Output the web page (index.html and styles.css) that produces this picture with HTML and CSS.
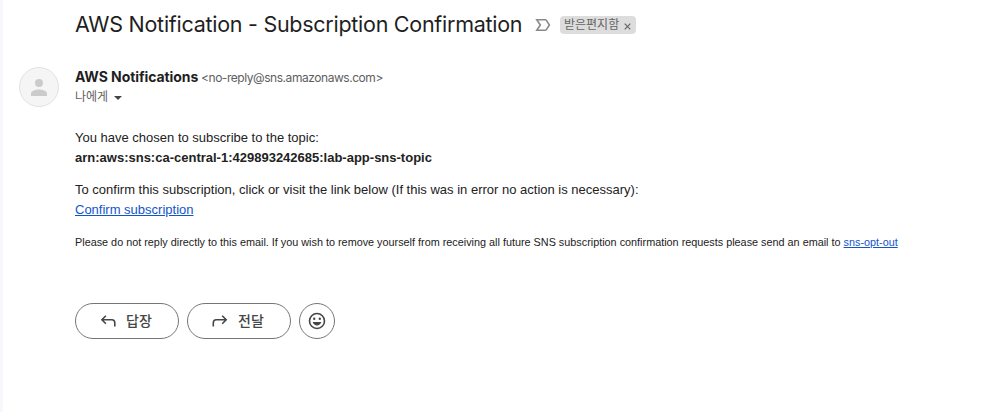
FILE: index.html
```html
<!DOCTYPE html>
<html lang="ko">
<head>
<meta charset="utf-8">
<title>AWS Notification - Subscription Confirmation</title>
<link rel="stylesheet" href="styles.css">
</head>
<body>
<main class="mail">
  <header class="subject">
    <h1 class="subject-text">AWS Notification - Subscription Confirmation</h1>
    <svg class="important" width="16" height="14" viewBox="0 0 16 14" fill="none" stroke="#8a8a8a" stroke-width="1.6"><path d="M1.8 1.8H10.2Q11 1.8 11.4 2.4L14.4 7L11.4 11.6Q11 12.2 10.2 12.2H1.8L5.3 7Z"/></svg>
    <span class="label"><span class="label-name">받은편지함</span><svg width="7" height="7" viewBox="0 0 7 7" stroke="#666" stroke-width="1.2"><path d="M.7.7L6.3 6.3M6.3.7L.7 6.3"/></svg></span>
  </header>
  <section class="sender">
    <div class="avatar"><svg width="16" height="17" viewBox="0 0 16 17" fill="#cbcbcb"><circle cx="8" cy="4" r="4"/><path d="M0 17V14.4C0 11.5 5 10.4 8 10.4S16 11.5 16 14.4V17Z"/></svg></div>
    <div class="sender-info">
      <div class="from"><strong class="name">AWS Notifications</strong><span class="address">&lt;no-reply@sns.amazonaws.com&gt;</span></div>
      <div class="to"><span>나에게</span><svg width="8" height="4" viewBox="0 0 8 4" fill="#444"><path d="M0 0H8L4 4Z"/></svg></div>
    </div>
  </section>
  <article class="body">
    <p>You have chosen to subscribe to the topic:<br><b>arn:aws:sns:ca-central-1:429893242685:lab-app-sns-topic</b></p>
    <p>To confirm this subscription, click or visit the link below (If this was in error no action is necessary):<br><a href="#">Confirm subscription</a></p>
    <p class="note">Please do not reply directly to this email. If you wish to remove yourself from receiving all future SNS subscription confirmation requests please send an email to <a href="#">sns-opt-out</a></p>
  </article>
  <footer class="actions">
    <button class="action"><svg width="16" height="12" viewBox="0 0 16 12" fill="none" stroke="#444746" stroke-width="1.6"><path d="M5.9.8L1.9 4.8L5.9 8.8M2.1 4.8H11.8Q14.8 4.8 14.8 7.8V11.5"/></svg><span>답장</span></button>
    <button class="action"><svg width="16" height="12" viewBox="0 0 16 12" fill="none" stroke="#444746" stroke-width="1.6"><path d="M10.2.8L14.2 4.8L10.2 8.8M14 4.8H4.3Q1.3 4.8 1.3 7.8V11.5"/></svg><span>전달</span></button>
    <button class="action react" aria-label="emoji"><svg width="18" height="18" viewBox="0 0 18 18"><circle cx="9" cy="9" r="7.5" fill="none" stroke="#444746" stroke-width="1.6"/><g fill="#444746"><circle cx="6.2" cy="6.7" r="1.2"/><circle cx="11.8" cy="6.7" r="1.2"/><path d="M4.7 10H13.3C12.6 12.2 11 13.5 9 13.5S5.4 12.2 4.7 10Z"/></g></svg></button>
  </footer>
</main>
</body>
</html>
```
FILE: styles.css
```css
* { box-sizing: border-box; }
body { margin: 0; background: #fff; color: #222; font-family: "Liberation Sans", Arial, sans-serif; }
.mail { height: 412px; border-left: 3px solid #f6f8fc; padding: 10px 16px 0; }
.subject { display: flex; align-items: center; height: 30px; padding-left: 56px; }
.subject-text { margin: -2px 0 0; width: 460px; font: 400 21.5px/28px Inter, Roboto, sans-serif; letter-spacing: -.27px; color: #1f1f1f; white-space: nowrap; }
.important { margin-right: 9px; }
.label { display: flex; align-items: center; justify-content: space-between; width: 76px; height: 18px; padding: 0 5px 0 4px; border-radius: 4px; background: #ddd; color: #666; font: 12px/18px "Noto Sans CJK KR", sans-serif; }
.label-name { position: relative; top: -1px; white-space: nowrap; }
.label svg { margin-top: 2px; }
.sender { display: flex; gap: 16px; margin-top: 27px; }
.avatar { display: flex; align-items: center; justify-content: center; width: 40px; height: 40px; border: 1px solid #e2e2e2; border-radius: 50%; background: #f5f5f5; }
.from { display: flex; align-items: baseline; height: 20px; font-family: Inter, Roboto, sans-serif; line-height: 20px; white-space: nowrap; }
.name { width: 126px; font-size: 14px; letter-spacing: -.08px; color: #1f1f1f; }
.address { font-size: 12px; letter-spacing: -.45px; color: #5e5e5e; }
.to { display: flex; align-items: center; gap: 6px; height: 18px; font: 12px/18px "Noto Sans CJK KR", sans-serif; color: #5e5e5e; }
.to svg { margin-top: 3px; }
.body { padding: 21px 0 0 56px; font-size: 13px; line-height: 20px; }
.body p { margin: 0 0 12px; white-space: nowrap; }
.body .note { font-size: 10.833px; line-height: 20px; margin: 0; }
a { color: #15c; }
.actions { display: flex; gap: 8px; margin: 51px 0 0 56px; }
.action { display: flex; align-items: center; justify-content: center; gap: 10px; width: 104px; height: 36px; padding: 0 2px 0 0; border: 1px solid #747775; border-radius: 18px; background: #fff; color: #444746; font: 500 14px/20px "Noto Sans CJK KR", sans-serif; }
.action span { margin-top: -2px; }
.react { width: 36px; padding: 0; }
```
